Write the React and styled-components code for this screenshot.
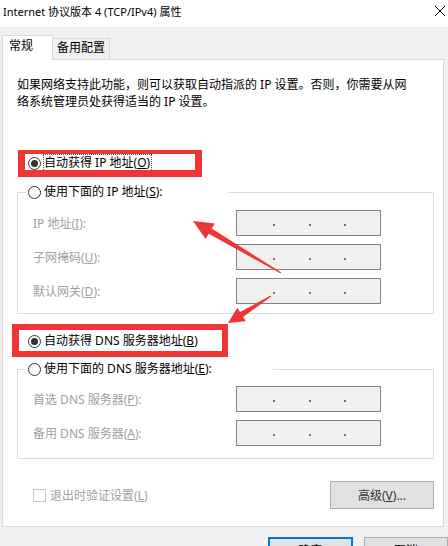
import React from "react";
import styled, { createGlobalStyle } from "styled-components";

const FONT = `"Noto Sans", "Noto Sans CJK SC", sans-serif`;
const RED = "#ef3535";

const Global = createGlobalStyle`
  html, body { margin: 0; padding: 0; background: #f0f0f0; }
  body { font-family: ${FONT}; font-size: 12px; }
`;

const Window = styled.div`
  position: relative;
  width: 448px;
  height: 546px;
  overflow: hidden;
  background: #f0f0f0;
  display: flex;
  flex-direction: column;
  font-family: ${FONT};
  font-size: 12px;
  color: #000;
`;

const TitleBar = styled.div`
  flex: none;
  height: 27px;
  box-sizing: border-box;
  background: #fff;
  display: flex;
  align-items: center;
  justify-content: space-between;
  padding: 0 1px 3px 3px;
`;

const Title = styled.span`
  font-size: 11px;
  line-height: 16px;
  white-space: nowrap;
`;

const TabStrip = styled.div`
  flex: none;
  height: 32px;
  display: flex;
  align-items: flex-end;
  padding-left: 2px;
`;

const Tab = styled.div`
  position: relative;
  box-sizing: border-box;
  width: ${(p) => p.$w}px;
  height: ${(p) => (p.$active ? 25 : 21)}px;
  margin-bottom: ${(p) => (p.$active ? -1 : 0)}px;
  z-index: ${(p) => (p.$active ? 2 : 1)};
  background: ${(p) => (p.$active ? "#fff" : "#f0f0f0")};
  border: 1px solid #d9d9d9;
  border-bottom: none;
  border-left: ${(p) => (p.$active ? "1px solid #d9d9d9" : "none")};
  padding: ${(p) => (p.$active ? "2px 0 0 6px" : "1px 0 0 4px")};
  line-height: 16px;
  font-size: 12px;
  white-space: nowrap;
`;

const Panel = styled.div`
  flex: none;
  box-sizing: border-box;
  height: 468px;
  margin: 0 4px 0 2px;
  background: #fff;
  border: 1px solid #d9d9d9;
  padding: 16px 9px 0 14px;
  display: flex;
  flex-direction: column;
`;

const Desc = styled.p`
  margin: 0;
  line-height: 17px;
  white-space: nowrap;
`;

const Line = styled.span`
  display: block;
`;

const RadioRow = styled.div`
  position: relative;
  display: flex;
  align-items: center;
  gap: 3px;
  height: 18px;
  margin-top: ${(p) => p.$mt || 0}px;
  padding-left: ${(p) => (p.$pl != null ? p.$pl : 11)}px;
  white-space: nowrap;
  &::after {
    content: "";
    display: ${(p) => (p.$box ? "block" : "none")};
    position: absolute;
    box-sizing: border-box;
    left: ${(p) => p.$box?.l}px;
    top: ${(p) => p.$box?.t}px;
    width: ${(p) => p.$box?.w}px;
    height: ${(p) => p.$box?.h}px;
    border-style: solid;
    border-color: ${RED};
    border-width: ${(p) => p.$box?.bw};
    pointer-events: none;
  }
`;

const Radio = styled.span`
  flex: none;
  position: relative;
  box-sizing: border-box;
  width: 13px;
  height: 13px;
  border: 1px solid #333;
  border-radius: 50%;
  background: #fff;
  &::after {
    content: "";
    display: ${(p) => (p.$checked ? "block" : "none")};
    position: absolute;
    left: 2px;
    top: 2px;
    width: 7px;
    height: 7px;
    border-radius: 50%;
    background: #333;
  }
`;

const RadioText = styled.span`
  line-height: 16px;
  outline: ${(p) => (p.$focus ? "1px dotted #555" : "none")};
  outline-offset: 0;
  padding-right: ${(p) => (p.$focus ? 1 : 0)}px;
`;

const Mn = styled.span`
  text-decoration: underline;
  text-underline-offset: 1px;
`;

const Group = styled.fieldset`
  margin: ${(p) => p.$mt}px 0 0 0;
  padding: 0;
  border: 1px solid #dcdcdc;
  min-width: 0;
`;

const Legend = styled.legend`
  box-sizing: border-box;
  width: ${(p) => p.$w}px;
  margin-left: 8px;
  padding: 0 0 0 2px;
  background: #fff;
`;

const Fields = styled.div`
  display: flex;
  flex-direction: column;
  gap: 8px;
  padding: ${(p) => p.$pt}px 0 ${(p) => p.$pb}px 15px;
`;

const FieldRow = styled.div`
  display: flex;
  align-items: center;
  height: 26px;
`;

const FieldLabel = styled.span`
  width: 203px;
  flex: none;
  color: #a0a0a0;
  white-space: nowrap;
`;

const IpBox = styled.div`
  box-sizing: border-box;
  width: 145px;
  height: 26px;
  border: 1px solid #838383;
  background: #f0f0f0;
  display: flex;
  align-items: center;
  justify-content: space-evenly;
  padding-left: 2px;
`;

const Dot = styled.span`
  width: 2px;
  height: 2px;
  margin-top: 4px;
  background: #6f6f6f;
`;

const BottomRow = styled.div`
  display: flex;
  align-items: center;
  justify-content: space-between;
  height: 28px;
  margin-top: 22px;
  padding-left: 16px;
`;

const CheckWrap = styled.label`
  display: flex;
  align-items: center;
  gap: 4px;
  color: #a0a0a0;
  white-space: nowrap;
`;

const CheckBox = styled.span`
  box-sizing: border-box;
  width: 13px;
  height: 13px;
  border: 1px solid #c8c8c8;
  background: #fff;
`;

const Button = styled.div`
  flex: none;
  box-sizing: border-box;
  width: ${(p) => p.$w}px;
  height: ${(p) => p.$h}px;
  background: #e1e1e1;
  border: ${(p) => (p.$primary ? "2px solid #0078d7" : "1px solid #adadad")};
  display: flex;
  align-items: center;
  justify-content: center;
  color: ${(p) => p.$color || "#000"};
  white-space: nowrap;
  font-size: 12px;
`;

const Footer = styled.div`
  flex: none;
  display: flex;
  justify-content: flex-end;
  gap: 11px;
  padding-top: 10px;
`;

const Overlay = styled.svg`
  position: absolute;
  left: 0;
  top: 0;
  pointer-events: none;
`;

function arrowPoints(T, P, h, w, a, b) {
  const dx = P[0] - T[0];
  const dy = P[1] - T[1];
  const len = Math.hypot(dx, dy);
  const u = [dx / len, dy / len];
  const n = [-u[1], u[0]];
  const B = [P[0] - u[0] * h, P[1] - u[1] * h];
  const pts = [
    [T[0] + n[0] * a, T[1] + n[1] * a],
    [B[0] + n[0] * b, B[1] + n[1] * b],
    [B[0] + n[0] * w, B[1] + n[1] * w],
    P,
    [B[0] - n[0] * w, B[1] - n[1] * w],
    [B[0] - n[0] * b, B[1] - n[1] * b],
    [T[0] - n[0] * a, T[1] - n[1] * a],
  ];
  return pts.map((p) => `${p[0].toFixed(1)},${p[1].toFixed(1)}`).join(" ");
}

const IpField = ({ label }) => (
  <FieldRow>
    <FieldLabel>{label}</FieldLabel>
    <IpBox>
      <Dot />
      <Dot />
      <Dot />
    </IpBox>
  </FieldRow>
);

export default function App() {
  return (
    <>
      <Global />
      <Window>
        <TitleBar>
          <Title>Internet 协议版本 4 (TCP/IPv4) 属性</Title>
          <svg width="12" height="12" viewBox="0 0 12 12" style={{ marginRight: 1, marginTop: -2 }}>
            <path d="M1 1 L11 11 M11 1 L1 11" stroke="#000" strokeWidth="1" fill="none" />
          </svg>
        </TitleBar>
        <TabStrip>
          <Tab $active $w={51}>常规</Tab>
          <Tab $w={57}>备用配置</Tab>
        </TabStrip>
        <Panel>
          <Desc>
            <Line>如果网络支持此功能，则可以获取自动指派的 IP 设置。否则，你需要从网</Line>
            <Line>络系统管理员处获得适当的 IP 设置。</Line>
          </Desc>

          <RadioRow $mt={44} $box={{ l: 1, t: -4, w: 184, h: 27, bw: "4px 7px 7px 7px" }}>
            <Radio $checked />
            <RadioText $focus>
              自动获得 IP 地址(<Mn>O</Mn>)
            </RadioText>
          </RadioRow>

          <Group $mt={11}>
            <Legend $w={202}>
              <RadioRow $pl={0}>
                <Radio />
                <RadioText>
                  使用下面的 IP 地址(<Mn>S</Mn>):
                </RadioText>
              </RadioRow>
            </Legend>
            <Fields $pt={9} $pb={9}>
              <IpField label={<>IP 地址(<Mn>I</Mn>):</>} />
              <IpField label={<>子网掩码(<Mn>U</Mn>):</>} />
              <IpField label={<>默认网关(<Mn>D</Mn>):</>} />
            </Fields>
          </Group>

          <RadioRow $mt={18} $box={{ l: -5, t: -8, w: 216, h: 33, bw: "6px 6px 6px 7px" }}>
            <Radio $checked />
            <RadioText>
              自动获得 DNS 服务器地址(<Mn>B</Mn>)
            </RadioText>
          </RadioRow>

          <Group $mt={10}>
            <Legend $w={247}>
              <RadioRow $pl={0}>
                <Radio />
                <RadioText>
                  使用下面的 DNS 服务器地址(<Mn>E</Mn>):
                </RadioText>
              </RadioRow>
            </Legend>
            <Fields $pt={8} $pb={12}>
              <IpField label={<>首选 DNS 服务器(<Mn>P</Mn>):</>} />
              <IpField label={<>备用 DNS 服务器(<Mn>A</Mn>):</>} />
            </Fields>
          </Group>

          <BottomRow>
            <CheckWrap>
              <CheckBox />
              <span>
                退出时验证设置(<Mn>L</Mn>)
              </span>
            </CheckWrap>
            <Button $w={104} $h={28} $color="#333">
              高级(<Mn>V</Mn>)...
            </Button>
          </BottomRow>
        </Panel>
        <Footer>
          <Button $primary $w={85} $h={26}>确定</Button>
          <Button $w={84} $h={26}>取消</Button>
        </Footer>

        <Overlay width="448" height="546" viewBox="0 0 448 546">
          <polygon points={arrowPoints([281, 273], [193, 221], 20, 9, 0.6, 3)} fill={RED} />
          <polygon points={arrowPoints([271, 296], [228, 323], 16, 8, 0.6, 3)} fill={RED} />
        </Overlay>
      </Window>
    </>
  );
}
